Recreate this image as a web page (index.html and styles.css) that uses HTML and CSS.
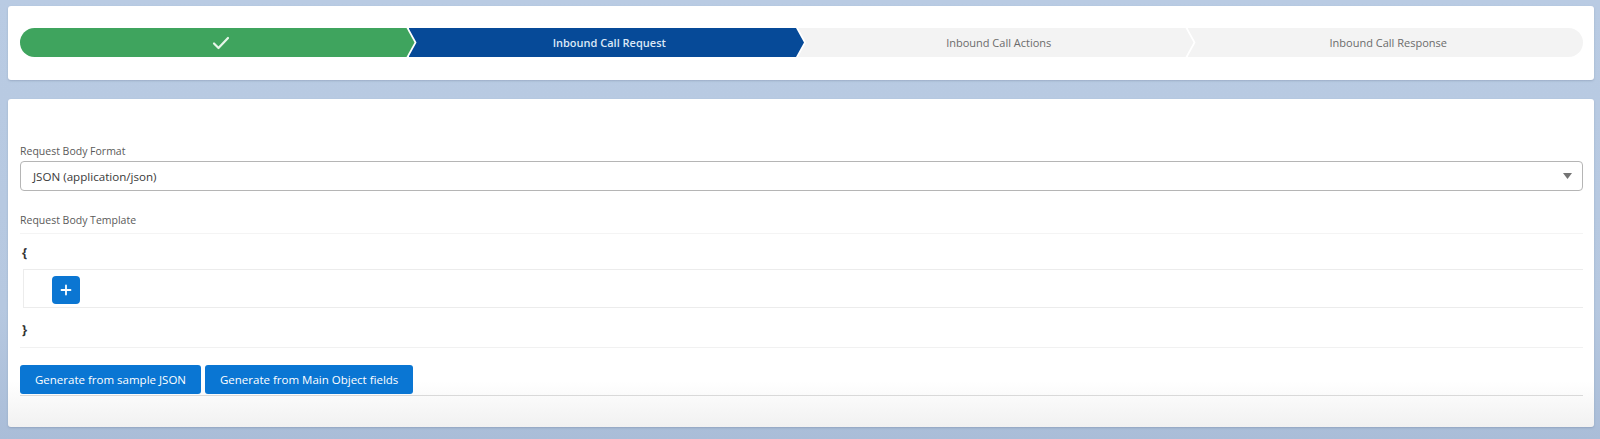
FILE: index.html
```html
<!DOCTYPE html>
<html lang="en">
<head>
<meta charset="utf-8">
<title>Inbound Call Request</title>
<link rel="stylesheet" href="styles.css">
</head>
<body>
<div class="page">
  <section class="card card-path">
    <ol class="path">
      <li class="step step-done">
        <svg class="check" width="18" height="14" viewBox="0 0 18 14" aria-hidden="true">
          <path d="M2 7.5 L6.5 12 L16 2" fill="none" stroke="#e6f6e9" stroke-width="2.2" stroke-linecap="round" stroke-linejoin="round"/>
        </svg>
      </li>
      <li class="step step-current">Inbound Call Request</li>
      <li class="step step-todo">Inbound Call Actions</li>
      <li class="step step-todo step-last">Inbound Call Response</li>
    </ol>
  </section>

  <section class="card card-form">
    <div class="field">
      <label class="field-label">Request Body Format</label>
      <div class="select">
        <span class="select-value">JSON (application/json)</span>
        <svg class="select-caret" width="9" height="6" viewBox="0 0 9 6" aria-hidden="true">
          <path d="M0 0 H9 L4.5 6 Z" fill="#747474"/>
        </svg>
      </div>
    </div>

    <div class="field field-template">
      <label class="field-label">Request Body Template</label>
      <div class="template">
        <div class="brace-row brace-open">{</div>
        <div class="template-items">
          <button class="add-btn" type="button" aria-label="Add">
            <svg width="12" height="12" viewBox="0 0 12 12" aria-hidden="true">
              <path d="M6 1.5 V10.5 M1.5 6 H10.5" stroke="#ffffff" stroke-width="1.8" stroke-linecap="round"/>
            </svg>
          </button>
        </div>
        <div class="brace-row brace-close">}</div>
      </div>
    </div>

    <div class="actions">
      <button class="btn" type="button">Generate from sample JSON</button>
      <button class="btn" type="button">Generate from Main Object fields</button>
    </div>
  </section>
</div>
</body>
</html>
```

FILE: styles.css
```css
* {
  box-sizing: border-box;
}

html,
body {
  margin: 0;
  height: 100%;
}

body {
  background: linear-gradient(180deg, #b9cbe3 0%, #b6c8e0 70%, #aabdd8 100%);
  font-family: "Open Sans", "Noto Sans", "Liberation Sans", sans-serif;
  color: #3e3e3c;
}

.page {
  display: flex;
  flex-direction: column;
  gap: 19px;
  padding: 6px 6px 0 8px;
}

.card {
  background: #ffffff;
  border-radius: 3px;
  box-shadow: 0 1px 2px rgba(70, 90, 120, 0.25);
}

/* ---- progress path ---- */

.card-path {
  height: 74px;
  padding: 22px 11px 0 12px;
}

.path {
  display: flex;
  list-style: none;
  margin: 0;
  padding: 0;
  height: 29px;
}

.step {
  flex: 1 1 0;
  display: flex;
  align-items: center;
  justify-content: center;
  font-size: 11px;
  white-space: nowrap;
  margin-left: -6px;
  clip-path: polygon(0 0, calc(100% - 8px) 0, 100% 50%, calc(100% - 8px) 100%, 0 100%, 8px 50%);
}

.step-done {
  flex: 1 1 5px;
  margin-left: 0;
  background: #3fa45e;
  border-radius: 15px 0 0 15px;
  clip-path: polygon(0 0, calc(100% - 8px) 0, 100% 50%, calc(100% - 8px) 100%, 0 100%);
}

.check {
  display: block;
  margin-left: 8px;
}

.step-current {
  background: #064a98;
  color: #dbe8f7;
  font-weight: 600;
  padding-left: 6px;
}

.step-todo {
  background: #f3f3f3;
  color: #6b6b6b;
  padding-left: 6px;
}

.step-last {
  border-radius: 0 15px 15px 0;
  clip-path: polygon(0 0, 100% 0, 100% 100%, 0 100%, 8px 50%);
}

/* ---- form card ---- */

.card-form {
  height: 328px;
  padding: 45px 11px 0 12px;
  background: linear-gradient(180deg, #ffffff 0%, #ffffff 86%, #f1f1f1 100%);
}

.field-label {
  display: block;
  font-size: 10.5px;
  line-height: 15px;
  color: #5a5a5a;
}

.select {
  margin-top: 2px;
  height: 30px;
  border: 1px solid #b5b5b5;
  border-radius: 4px;
  background: #ffffff;
  display: flex;
  align-items: center;
  justify-content: space-between;
  padding: 0 10px 0 12px;
}

.select-value {
  font-size: 11.6px;
  color: #3a3a3a;
}

.select-caret {
  display: block;
}

.field-template {
  margin-top: 22px;
}

.template {
  margin-top: 5px;
  border-top: 1px solid #f4f4f4;
}

.brace-row {
  font-size: 13px;
  font-weight: 700;
  color: #333333;
  padding-left: 2px;
}

.brace-open {
  height: 35px;
  padding-top: 9px;
}

.brace-close {
  height: 40px;
  padding-top: 12px;
  border-bottom: 1px solid #f1f1f1;
}

.template-items {
  height: 39px;
  margin-left: 3px;
  border: 1px solid #ececec;
  border-right: none;
  padding: 6px 0 0 28px;
}

.add-btn {
  width: 28px;
  height: 28px;
  border: none;
  border-radius: 4px;
  background: #0b76d2;
  display: flex;
  align-items: center;
  justify-content: center;
  padding: 0;
}

.add-btn svg {
  display: block;
}

.actions {
  margin-top: 17px;
  display: flex;
  gap: 4px;
  border-bottom: 1px solid #d9d9d9;
}

.btn {
  height: 29px;
  border: none;
  border-radius: 3px;
  background: #0a76d3;
  color: #ffffff;
  font-family: "Open Sans", "Noto Sans", "Liberation Sans", sans-serif;
  font-size: 11.5px;
  padding: 0 15px;
  margin-bottom: 1px;
}
```
